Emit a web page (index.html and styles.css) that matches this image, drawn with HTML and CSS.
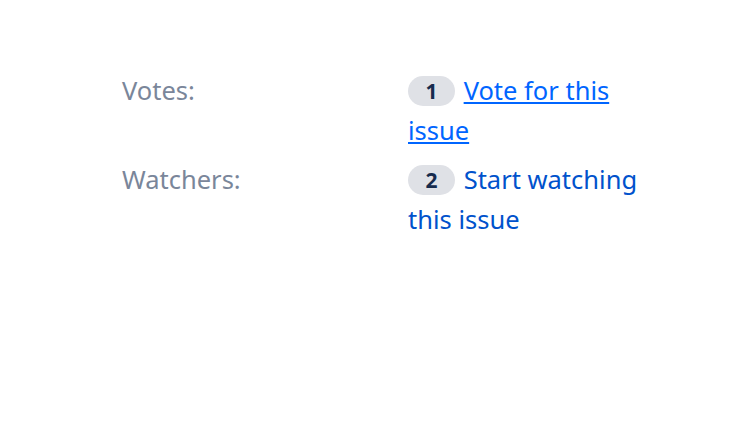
FILE: index.html
```html
<!DOCTYPE html>
<html lang="en">
  <head>
    <meta charset="UTF-8" />
    <meta name="viewport" content="width=device-width, initial-scale=1.0" />
    <title>People</title>
    <link rel="stylesheet" href="styles.css">
  </head>
  <body>
    <div class="people">
      <div class="row">
        <div class="label">Votes:</div>
        <div class="value">
          <span class="badge">1</span>
          <a href="#" class="link underlined">Vote for this issue</a>
        </div>
      </div>
      <div class="row">
        <div class="label">Watchers:</div>
        <div class="value">
          <span class="badge">2</span>
          <a href="#" class="link">Start watching this issue</a>
        </div>
      </div>
    </div>
  </body>
</html>
```

FILE: styles.css
```css
body {
  margin: 0;
  font-family: "Noto Sans", "Open Sans", sans-serif;
  background-color: #fff;
  color: #172b4d;
}

.people {
  padding: 70px 0 0 122px;
  display: flex;
  flex-direction: column;
  gap: 9px;
}

.row {
  display: flex;
  font-size: 25.5px;
  line-height: 40px;
}

.label {
  width: 286px;
  flex-shrink: 0;
  color: #7a869a;
}

.value {
  width: 255px;
}

.badge {
  display: inline-block;
  min-width: 47px;
  box-sizing: border-box;
  padding: 0 12px;
  margin-right: 2px;
  height: 30px;
  line-height: 30px;
  border-radius: 15px;
  background-color: #dfe1e6;
  color: #172b4d;
  font-size: 21px;
  font-weight: bold;
  text-align: center;
  vertical-align: 1px;
}

.link {
  color: #0052cc;
  text-decoration: none;
}

.underlined {
  color: #0065ff;
  text-decoration: underline;
}
```
